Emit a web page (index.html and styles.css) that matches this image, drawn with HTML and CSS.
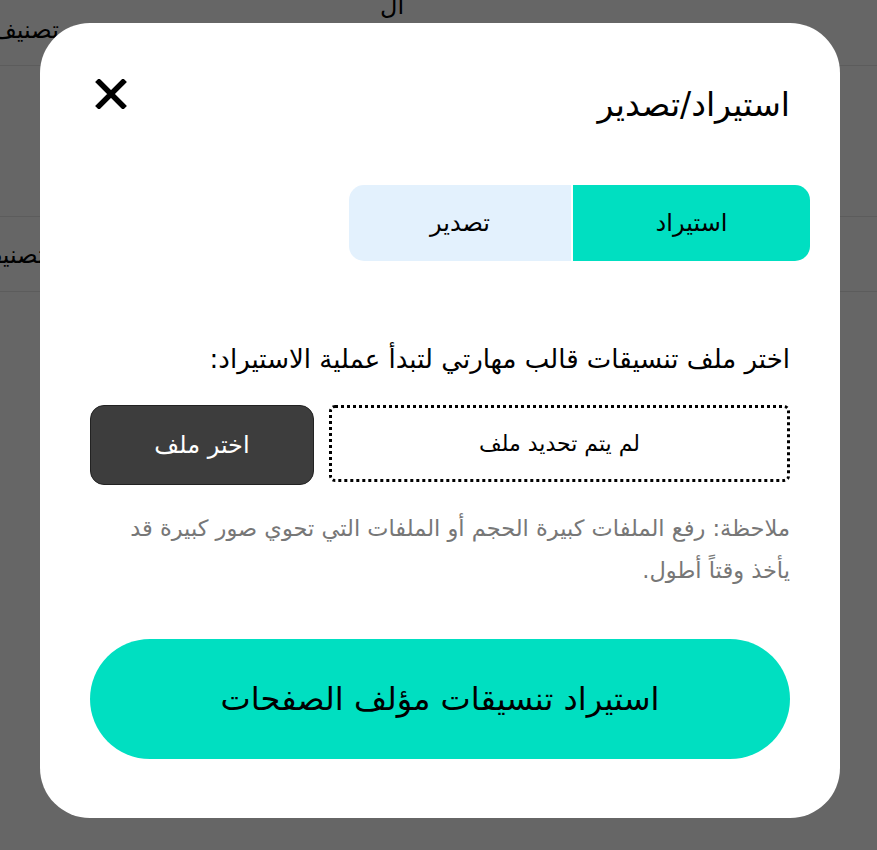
FILE: index.html
```html
<!DOCTYPE html>
<html lang="ar" dir="rtl">
<head>
<meta charset="utf-8">
<link rel="stylesheet" href="styles.css">
</head>
<body>
<div class="page">
  <div class="row row-a"><span class="cell-left">تصنيف</span><span class="cell-mid">ال</span></div>
  <div class="row row-b"></div>
  <div class="row row-c"><span class="cell-left">تصنيف</span></div>
</div>
<div class="overlay">
  <div class="modal">
    <div class="head">
      <h1 class="title">استيراد/تصدير</h1>
      <button class="close" aria-label="إغلاق">
        <svg width="34" height="30" viewBox="0 0 34 30"><path d="M5 3 L29 27 M29 3 L5 27" stroke="#000" stroke-width="5.5" stroke-linecap="square"/></svg>
      </button>
    </div>
    <div class="tabs">
      <div class="tab active">استيراد</div>
      <div class="tab">تصدير</div>
    </div>
    <p class="label">اختر ملف تنسيقات قالب مهارتي لتبدأ عملية الاستيراد:</p>
    <div class="file-row">
      <div class="file-box">لم يتم تحديد ملف</div>
      <button class="pick">اختر ملف</button>
    </div>
    <p class="note">ملاحظة: رفع الملفات كبيرة الحجم أو الملفات التي تحوي صور كبيرة قد يأخذ وقتاً أطول.</p>
    <button class="submit">استيراد تنسيقات مؤلف الصفحات</button>
  </div>
</div>
</body>
</html>
```
FILE: styles.css
```css
html, body {
  margin: 0;
  padding: 0;
  background: #fff;
  font-family: "DejaVu Sans", "Noto Sans", sans-serif;
}
.page {
  width: 877px;
  height: 850px;
  overflow: hidden;
  position: relative;
}
.row {
  border-bottom: 1px solid #e6e6e6;
  position: relative;
  font-size: 24px;
}
.row-a { height: 65px; }
.row-b { height: 150px; }
.row-c { height: 74px; }
.cell-left {
  position: absolute;
  left: -8px;
  top: 16px;
}
.row-c .cell-left { top: 24px; left: -22px; }
.cell-mid {
  position: absolute;
  left: 380px;
  top: -8px;
}
.overlay {
  position: fixed;
  inset: 0;
  background: rgba(0, 0, 0, 0.6);
}
.modal {
  position: absolute;
  left: 40px;
  top: 23px;
  width: 800px;
  height: 795px;
  box-sizing: border-box;
  background: #fff;
  border-radius: 50px;
  padding: 50px 50px 0 50px;
  display: flex;
  flex-direction: column;
}
.head {
  display: flex;
  justify-content: space-between;
  align-items: flex-start;
  height: 112px;
}
.title {
  margin: 10px 0 0 0;
  font-size: 33px;
  font-weight: normal;
  line-height: 44px;
  color: #000;
}
.close {
  background: none;
  border: 0;
  padding: 0;
  margin: 6px 0 0 4px;
  width: 34px;
  height: 30px;
  cursor: pointer;
}
.close svg { display: block; }
.tabs {
  display: flex;
  width: 461px;
  height: 76px;
  margin-right: -20px;
  border-radius: 15px;
  overflow: hidden;
  gap: 2px;
}
.tab {
  display: flex;
  align-items: center;
  justify-content: center;
  font-size: 24px;
  background: #e3f1fd;
  color: #000;
  flex: 1;
}
.tab.active {
  background: #00dfc1;
  flex: 0 0 237px;
}
.label {
  margin: 80px 0 0 0;
  font-size: 26px;
  line-height: 36px;
  color: #000;
}
.file-row {
  display: flex;
  gap: 15px;
  margin-top: 28px;
  height: 80px;
}
.file-box {
  flex: 1;
  box-sizing: border-box;
  height: 77px;
  border: 3px dotted #000;
  border-radius: 6px;
  display: flex;
  align-items: center;
  justify-content: center;
  font-size: 22px;
  color: #000;
}
.pick {
  flex: 0 0 224px;
  height: 80px;
  background: #3d3d3d;
  color: #fff;
  border: 1px solid #222;
  border-radius: 14px;
  font-family: inherit;
  font-size: 24px;
}
.note {
  margin: 22px 0 0 0;
  padding-left: 20px;
  font-size: 22.5px;
  line-height: 42px;
  color: #777;
}
.submit {
  margin-top: 48px;
  height: 120px;
  border: 0;
  border-radius: 60px;
  background: #00dfc1;
  color: #000;
  font-family: inherit;
  font-size: 32px;
}
```
